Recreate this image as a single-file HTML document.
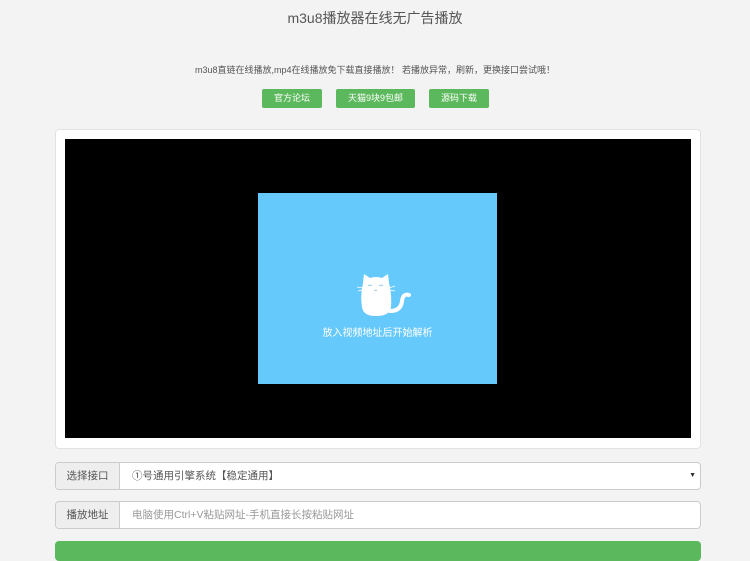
<!DOCTYPE html>
<html><head><meta charset="utf-8"><style>
body{margin:0;width:750px;height:550px;overflow:hidden;background:#f3f3f3;font-family:"Liberation Sans","Noto Sans CJK SC",sans-serif;position:relative}
.a{position:absolute}
.t{top:8px;left:0;width:750px;text-align:center;font-size:14px;color:#555}
.s{top:63px;left:0;width:750px;text-align:center;font-size:9px;color:#555}
.b{top:89px;height:19px;background:#5cb85c;color:#fff;font-size:9px;line-height:19px;text-align:center;border-radius:2px}
.p{left:55px;top:129px;width:646px;height:320px;background:#fff;border:1px solid #e2e2e2;border-radius:4px;box-sizing:border-box}
.row{left:55px;width:646px;height:28px;border:1px solid #ccc;border-radius:4px;box-sizing:border-box;background:#fff;font-size:10.5px;line-height:26px}
.lab{position:absolute;left:0;top:0;width:63px;height:26px;background:#eee;border-right:1px solid #ccc;color:#555;text-align:center;border-radius:4px 0 0 4px}
</style></head><body>
<div class="a t">m3u8播放器在线无广告播放</div>
<div class="a s">m3u8直链在线播放,mp4在线播放免下载直接播放！ 若播放异常，刷新，更换接口尝试哦！</div>
<div class="a b" style="left:262px;width:60px">官方论坛</div>
<div class="a b" style="left:336px;width:79px">天猫9块9包邮</div>
<div class="a b" style="left:429px;width:60px">源码下载</div>
<div class="a p"></div>
<div class="a" style="left:65px;top:139px;width:626px;height:299px;background:#000"></div>
<div class="a" style="left:258px;top:193px;width:239px;height:191px;background:#66c9fb"></div>
<svg class="a" style="left:355px;top:273px" width="58" height="46" viewBox="0 0 58 46">
<path d="M8 10 L9 1 L15 5 Q21 3 27 5 L33 1 L34 10 Q37 22 36 34 Q35 43 21 43 Q8 43 7 34 Q5 22 8 10Z" fill="#fff"/>
<path d="M35 38 Q46 38 47 28 Q48 20 54 22" stroke="#fff" stroke-width="4" fill="none" stroke-linecap="round"/>
<path d="M13 13 q2 -2 4 0 M24 13 q2 -2 4 0 M19 17 q2 1 3 0" stroke="#9cd" stroke-width="1" fill="none"/>
<path d="M2 14 L8 15 M3 18 L8 17 M34 15 L40 13 M34 17 L40 18" stroke="#fff" stroke-width="0.8"/>
</svg>
<div class="a" style="left:258px;top:324px;width:239px;text-align:center;color:#fff;font-size:10px">放入视频地址后开始解析</div>
<div class="a row" style="top:462px"><div class="lab">选择接口</div><span style="position:absolute;left:76px;color:#555">①号通用引擎系统【稳定通用】</span><span style="position:absolute;right:4px;font-size:7px;color:#333">▼</span></div>
<div class="a row" style="top:501px"><div class="lab">播放地址</div><span style="position:absolute;left:76px;color:#999">电脑使用Ctrl+V粘贴网址-手机直接长按粘贴网址</span></div>
<div class="a" style="left:55px;top:541px;width:646px;height:20px;background:#5cb85c;border-radius:4px"></div>
</body></html>
